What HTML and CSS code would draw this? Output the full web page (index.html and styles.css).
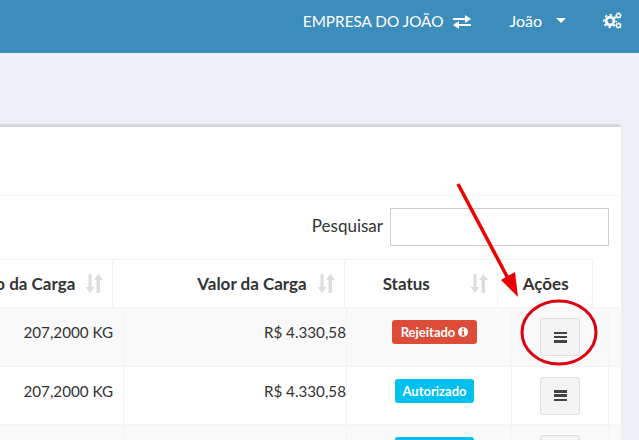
FILE: index.html
```html
<!DOCTYPE html>
<html lang="pt-BR">
    <head>
        <meta charset="UTF-8">
        <meta name="viewport" content="width=device-width, initial-scale=1.0">
        <title>Cargas</title>
        <link rel="stylesheet" href="styles.css">
    </head>
    <body>
        <svg class="defs" width="0" height="0">
            <symbol id="sort" viewBox="0 0 18 19">
                <path d="M3.500 0h3v13h3l-4.500 6-4.500-6h3z"/>
                <path d="M11.500 19h3.500V6h3L13.300 0 9 6h2.500z"/>
            </symbol>
            <symbol id="gear" viewBox="0 0 16 16">
                <circle cx="8" cy="8" r="4.400" fill="none" stroke="#fff" stroke-width="3"/>
                <circle cx="8" cy="8" r="7" fill="none" stroke="#fff" stroke-width="2" stroke-dasharray="2.750 2.750" stroke-dashoffset="1.375"/>
            </symbol>
        </svg>

        <header class="topbar">
            <span class="empresa">EMPRESA DO JOÃO</span>
            <svg class="ico-troca" viewBox="0 0 18 14"><path d="M0 3h12V0l6 4-6 4V5H0zM18 9H6V6l-6 4 6 4v-3h12z" fill="#fff"/></svg>
            <span class="usuario">João</span>
            <span class="caret"></span>
            <svg class="ico-cogs" viewBox="0 0 19 17">
                <use href="#gear" x="0" y="2" width="14" height="14"/>
                <use href="#gear" x="12" y="0" width="7" height="7"/>
                <use href="#gear" x="12" y="10" width="7" height="7"/>
            </svg>
        </header>

        <main class="conteudo">
            <section class="box">
                <div class="box-header"></div>
                <div class="busca">
                    <label for="q">Pesquisar</label>
                    <input id="q" type="text">
                </div>
                <div class="tabela-head">
                    <div class="th col-peso">Peso da Carga <svg class="sort"><use href="#sort"/></svg></div>
                    <div class="th col-valor">Valor da Carga <svg class="sort"><use href="#sort"/></svg></div>
                    <div class="th col-status">Status <svg class="sort"><use href="#sort"/></svg></div>
                    <div class="th col-acoes">Ações</div>
                </div>
                <div class="linha par">
                    <div class="td b-peso">207,2000 KG</div>
                    <div class="td b-valor">R$ 4.330,58</div>
                    <div class="td b-status"><span class="label vermelho">Rejeitado <svg viewBox="0 0 10 10"><circle cx="5" cy="5" r="5" fill="#fff"/><path d="M4 1.500h2v1.700H4zM3.500 4.200h2.500v3.200h.7v1.100H3.400V7.400h.8V5.300h-.7z" fill="#dd4b39"/></svg></span></div>
                    <div class="td b-acoes"><button class="btn"><span></span><span></span><span></span></button></div>
                </div>
                <div class="linha">
                    <div class="td b-peso">207,2000 KG</div>
                    <div class="td b-valor">R$ 4.330,58</div>
                    <div class="td b-status"><span class="label azul">Autorizado</span></div>
                    <div class="td b-acoes"><button class="btn"><span></span><span></span><span></span></button></div>
                </div>
                <div class="linha par">
                    <div class="td b-peso"></div>
                    <div class="td b-valor"></div>
                    <div class="td b-status"><span class="label azul vazio"></span></div>
                    <div class="td b-acoes"><button class="btn"><span></span><span></span><span></span></button></div>
                </div>
            </section>
        </main>

        <svg class="anotacao" viewBox="0 0 639 440">
            <path d="M458 184 511 284" fill="none" stroke="#ec0000" stroke-width="3.500"/>
            <path d="M501 280 518 297 515 272z" fill="#ec0000"/>
            <ellipse cx="559" cy="332.500" rx="37" ry="31.500" fill="none" stroke="#dc0010" stroke-width="3"/>
        </svg>
    </body>
</html>
```

FILE: styles.css
```css
*{
    padding: 0;
    margin: 0;
    box-sizing: border-box;
    font-family: Lato, "Open Sans", Arial, sans-serif;
}
body{background-color: #ecf0f5; color: #333; height: 440px; overflow: hidden; position: relative;}
.defs{position: absolute;}

.topbar{height: 53px; background-color: #3c8dbc; color: #fff; display: flex; align-items: flex-start; padding: 11px 17px 0 0; justify-content: flex-end; font-size: 15.300px; line-height: 20px;}
.empresa{margin-right: 10px;}
.ico-troca{width: 18px; height: 14px; margin: 4px 38px 0 0;}
.usuario{margin-right: 14px; font-size: 16px;}
.caret{width: 0; height: 0; border: 5.500px solid transparent; border-top-color: #fff; margin: 7px 37px 0 0;}
.ico-cogs{width: 19px; height: 17px; margin-top: 1px;}

.conteudo{padding: 71px 18px 0 0;}
.box{margin-left: -100px; background-color: #fff; border-top: 3px solid #d2d6de; border-radius: 3px; height: 316px; overflow: hidden;}
.box-header{height: 69px; border-bottom: 1px solid #f4f4f4;}
.busca{display: flex; justify-content: flex-end; align-items: flex-start; gap: 7px; padding: 12px 12px 0 0; height: 63px; font-size: 17px;}
.busca label{line-height: 36px;}
.busca input{width: 219px; height: 38px; border: 1px solid #ccc;}

.tabela-head{display: flex; height: 48px; border-top: 1px solid #f4f4f4; margin-right: 28px; font-size: 17px; font-weight: 700;}
.th{display: flex; align-items: center; justify-content: flex-end; gap: 10px; padding-right: 9px; border-right: 1px solid #f4f4f4;}
.col-peso{width: 214px;}
.col-valor{width: 232px;}
.col-status{width: 154px; justify-content: space-between; padding-left: 38px;}
.col-acoes{width: 95px; justify-content: center; padding: 0 0 0 1px;}
.sort{width: 18px; height: 19px; fill: #ddd;}

.linha{display: flex; height: 58.500px; border-top: 1px solid #f4f4f4; font-size: 15.200px; line-height: 20px;}
.par{background-color: #f9f9f9;}
.td{padding-top: 14px; border-right: 1px solid #f4f4f4; text-align: right;}
.b-peso{width: 224px; padding-right: 10px;}
.b-valor{width: 223px;}
.b-status{width: 165px; padding-left: 11px; padding-top: 12px; text-align: center;}
.b-acoes{width: 97px; display: flex; justify-content: center; padding-top: 10px;}

.label{display: inline-flex; align-items: center; gap: 3px; height: 24px; padding: 0 8px; border-radius: 3px; color: #fff; font-size: 13px; font-weight: 700;}
.label svg{width: 10px; height: 10px;}
.vermelho{background-color: #dd4b39; padding: 0 8.500px;}
.azul{background-color: #00c0ef; padding: 0 7.500px;}
.vazio{width: 79px;}

.btn{width: 40px; height: 38px; background-color: #f4f4f4; border: 1px solid #ddd; border-radius: 3px; display: flex; flex-direction: column; align-items: center; justify-content: center; gap: 1.750px;}
.btn span{display: block; width: 13px; height: 2.500px; background-color: #444;}

.anotacao{position: absolute; left: 0; top: 0; width: 639px; height: 440px;}
```
